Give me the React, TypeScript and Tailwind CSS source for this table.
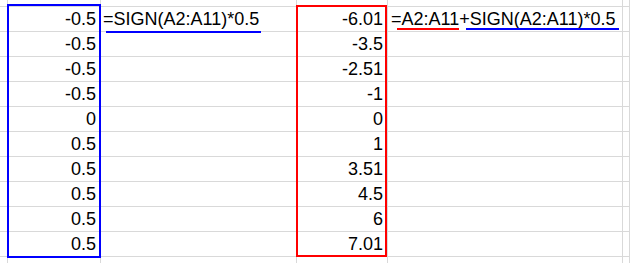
import React from "react";

const colA = ["-0.5", "-0.5", "-0.5", "-0.5", "0", "0.5", "0.5", "0.5", "0.5", "0.5"];
const colC = ["-6.01", "-3.5", "-2.51", "-1", "0", "1", "3.51", "4.5", "6", "7.01"];

const cell = "border-r border-b border-[#d9d9d9] overflow-visible";

export default function App() {
  const rows = [];
  // top partial row
  for (let c = 0; c < 6; c++) rows.push(<div key={`t${c}`} className={cell} />);
  for (let r = 0; r < 10; r++) {
    rows.push(<div key={`r${r}c0`} className={cell} />);
    rows.push(
      <div key={`r${r}c1`} className={`${cell} flex items-center justify-end pr-[4px]`}>
        {colA[r]}
      </div>
    );
    rows.push(
      <div key={`r${r}c2`} className={`${cell} flex items-center pl-[2px] whitespace-nowrap relative z-10`}>
        {r === 0 ? "=SIGN(A2:A11)*0.5" : ""}
      </div>
    );
    rows.push(
      <div key={`r${r}c3`} className={`${cell} flex items-center justify-end pr-[4px]`}>
        {colC[r]}
      </div>
    );
    rows.push(
      <div key={`r${r}c4`} className={`${cell} flex items-center pl-[3px] whitespace-nowrap`}>
        {r === 0 ? "=A2:A11+SIGN(A2:A11)*0.5" : ""}
      </div>
    );
    rows.push(<div key={`r${r}c5`} className={cell} />);
  }
  for (let c = 0; c < 6; c++) rows.push(<div key={`b${c}`} className={cell} />);

  return (
    <div
      className="relative w-[630px] h-[263px] overflow-hidden bg-white text-black text-[18px]"
      style={{ fontFamily: '"Liberation Sans", Arial, sans-serif' }}
    >
      <div className="grid grid-cols-[8px_93px_196px_91px_235px_1fr] grid-rows-[7px_repeat(10,25px)_20px] h-full">
        {rows}
      </div>
      {/* selection boxes */}
      <div className="absolute left-[7px] top-[4px] w-[94px] h-[254px] border-2 border-[#0000ff] z-20" />
      <div className="absolute left-[296px] top-[5px] w-[91px] h-[252px] border-2 border-[#ff0000] z-20" />
      {/* underlines */}
      <div className="absolute left-[106px] top-[31px] w-[155px] h-[2px] bg-[#0000ff] z-20" />
      <div className="absolute left-[397px] top-[28px] w-[62px] h-[2px] bg-[#ff0000] z-20" />
      <div className="absolute left-[466px] top-[28px] w-[153px] h-[2px] bg-[#0000ff] z-20" />
    </div>
  );
}
